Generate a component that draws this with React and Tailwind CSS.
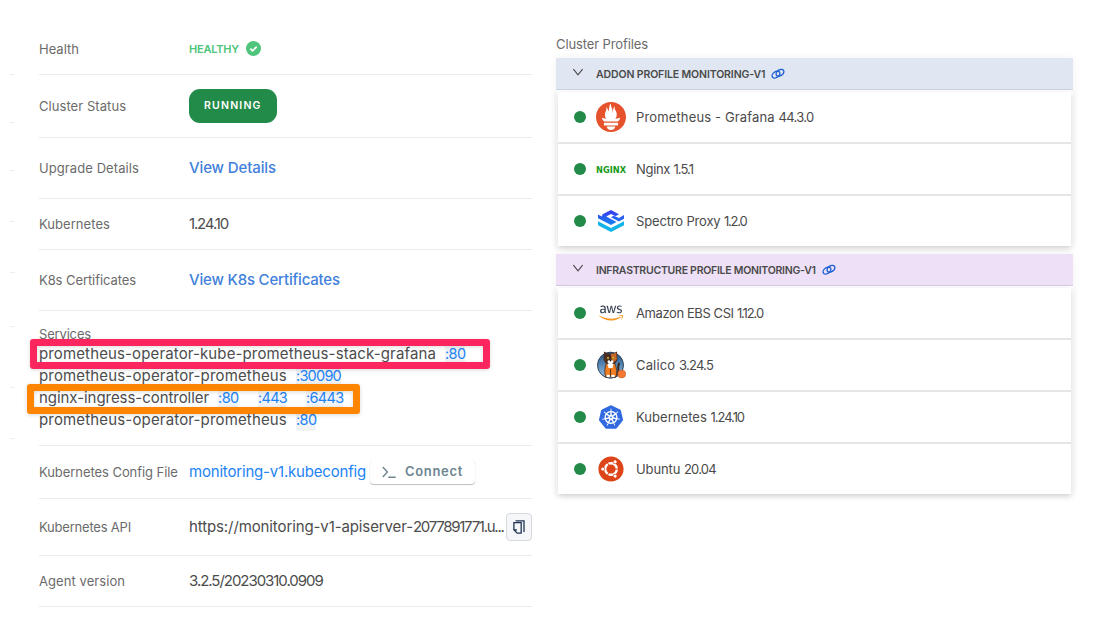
import React from "react";
import { SiPrometheus, SiKubernetes } from "react-icons/si";
import { FaAws, FaUbuntu } from "react-icons/fa";

const T = ({ className = "", children }) => (
  <span className={`whitespace-pre ${className}`}>{children}</span>
);

const label = "pt-[2px] text-[13px] text-[#6b6b6b]";
const value = "pt-px text-[15px] text-[#4c4c4c]";
const link = "pt-px text-[15px] font-medium text-[#4180db]";

const Row = ({ h, name, track = "", children }) => (
  <div className={`flex items-center border-b border-[#ebebeb] ${h}`}>
    <div className="flex w-[150px] shrink-0"><T className={`${label} ${track}`}>{name}</T></div>
    {children}
  </div>
);

const Port = ({ className, children }) => (
  <span className={`flex h-[22px] items-center bg-[#f2f3f4] text-[14.5px] text-[#1c83f5] ${className}`}>
    <T>{children}</T>
  </span>
);

const Service = ({ name, track, children }) => (
  <div className="flex h-[22px] items-center">
    <T className={`${value} pt-0! ${track}`}>{name}</T>
    <div className="ml-[9px] flex gap-5">{children}</div>
  </div>
);

const LinkIcon = () => (
  <svg className="ml-[6px] h-[12px] w-[14px]" viewBox="0 0 14 12" fill="none" stroke="#1d5fd3" strokeWidth="1.4">
    <ellipse cx="5" cy="6.6" rx="4.3" ry="2.9" transform="rotate(-35 5 6.6)" />
    <ellipse cx="9" cy="4.8" rx="4.3" ry="2.9" transform="rotate(-35 9 4.8)" />
  </svg>
);

const Header = ({ name, track, className }) => (
  <div className={`flex h-[32px] items-center border-b pl-[17px] ${className}`}>
    <svg className="mr-[13px] mb-[3px] h-[8px] w-[10px]" viewBox="0 0 10 8" fill="none" stroke="#4a4a4a" strokeWidth="1.1"><path d="M.4 1 5 6.8 9.6 1" /></svg>
    <T className={`pt-[2px] text-[10.5px] font-semibold text-[#4a4a4a] ${track}`}>{name}</T>
    <LinkIcon />
  </div>
);

const Pack = ({ icon, name, version, track = "", vtrack }) => (
  <div className="flex h-[50px] items-center bg-white pl-4">
    <span className="h-3 w-3 rounded-full bg-[#238b49]" />
    <span className="ml-[10px] mr-[10px] flex h-[30px] w-[30px] items-center justify-center">{icon}</span>
    <T className={`pt-px text-[13px] text-[#4a4a4a] ${track}`}>{name + " "}</T>
    <T className={`pt-px text-[13px] text-[#4a4a4a] ${vtrack}`}>{version}</T>
  </div>
);

const Nginx = () => (
  <svg className="h-[10px] w-[30px]" viewBox="0 0 30 10"><text x="0" y="8.8" textLength="30" lengthAdjust="spacingAndGlyphs" fontFamily="DejaVu Sans" fontWeight="700" fontSize="8.4" fill="#169b17">NGINX</text></svg>
);
const Spectro = () => (
  <svg className="h-[22px] w-[26px]" viewBox="0 0 26 22">
    <defs><linearGradient id="sp" gradientUnits="userSpaceOnUse" x1="0" y1="0" x2="0" y2="15"><stop stopColor="#3b35ee" /><stop offset="1" stopColor="#1689f2" /></linearGradient></defs>
    <path fill="url(#sp)" d="M13 0 21 4.2 17.5 6.2 13 4 8.2 6.4 18.6 12 13 15 0 8.2V4.6L3.8 6.6 4.6 4.2Z" />
    <path fill="url(#sp)" d="M26 5V8.8L20.8 11.4 13 7.2 15.6 5.8 21 8Z" />
    <path fill="#12b4e8" d="M0 11.2 13 18 26 11.2V15.2L13 22 0 15.2Z" />
  </svg>
);
const Aws = () => (
  <span className="flex">
    <svg className="h-0 w-0"><defs><linearGradient id="awsfill" x1="0" y1="0" x2="0" y2="1"><stop offset=".61" stopColor="#3b4656" /><stop offset=".61" stopColor="#f7981f" /></linearGradient></defs></svg>
    <FaAws className="h-[20px] w-[24px] [&_path]:fill-[url(#awsfill)]" preserveAspectRatio="none" />
  </span>
);
const Calico = () => (
  <svg className="h-[30px] w-[30px]" viewBox="0 0 30 30">
    <defs><linearGradient id="cal" x1="0" y1="0" x2="0" y2="1"><stop stopColor="#1b4f86" /><stop offset="1" stopColor="#9cc4e8" /></linearGradient></defs>
    <circle cx="14.5" cy="15.2" r="13" fill="url(#cal)" stroke="#23364a" strokeWidth=".9" />
    <path d="M20 25C25 23 20 17 23.5 13" stroke="#3a2a22" strokeWidth="2" fill="none" />
    <path d="M9.5 27C8 21 9 17 10.5 13H18.5C21 18 21 23 20 27Z" fill="#ef7d22" stroke="#33231b" strokeWidth=".7" />
    <path d="M8 1.5 11.5 3.5H17.5L21 1.5 21.5 9Q20.5 14.5 14.5 14.5T7.5 9Z" fill="#4a2d20" />
    <path d="M14.8 3.8H17.5L20.3 2.8 20.8 9.2Q19 12.5 16 12Z" fill="#c96a2b" />
    <path d="M11.5 14Q14.5 12 17.5 14L16.5 18H12.5Z" fill="#fff" />
    <ellipse cx="14.5" cy="11.8" rx="3" ry="1.8" fill="#fff" />
    <circle cx="12" cy="8.2" r="1.1" fill="#f4d33a" /><circle cx="17" cy="8.2" r="1.1" fill="#f4d33a" />
    <circle cx="12" cy="8.2" r=".5" /><circle cx="17" cy="8.2" r=".5" /><circle cx="14.5" cy="10.8" r=".8" />
    <path d="M14.5 19V26.5" stroke="#33231b" strokeWidth=".8" />
    <ellipse cx="12.2" cy="26" rx="1.8" ry="1.3" fill="#fff" /><ellipse cx="17" cy="26" rx="1.8" ry="1.3" fill="#fff" />
    <circle cx="25.7" cy="24" r="4" fill="#f4782f" stroke="#ba5523" strokeWidth=".5" />
  </svg>
);

const ticks = ["h-[75px]", "h-[48px]", "h-[48px]", "h-[51px]", "h-[51px]", "h-[54px]", "h-[61px]", "h-[51px]"];

export default function App() {
  return (
    <div className="flex h-[620px] w-[1111px] overflow-hidden bg-white font-['Inter',sans-serif]">
      <div className="ml-[10px] w-[5px] shrink-0">
        {ticks.map((t, i) => <div key={i} className={`border-b border-[#ececec] ${t}`} />)}
      </div>
      <div className="ml-6 mt-[23px] w-[493px] shrink-0">
        <Row h="h-[52px]" name="Health">
          <T className="pt-[2px] text-[11px] font-semibold tracking-[-0.2px] text-[#4ec57a]">HEALTHY</T>
          <svg className="ml-[7px] h-[15px] w-[15px]" viewBox="0 0 15 15"><circle cx="7.5" cy="7.5" r="7.5" fill="#4ec57a" /><path d="m4.3 7.7 2.3 2.2 4.1-4.3" fill="none" stroke="#fff" strokeWidth="1.7" /></svg>
        </Row>
        <Row h="h-[63px]" name="Cluster Status" track="tracking-[0.06px]">
          <div className="flex h-[34px] w-[88px] items-center rounded-[11px] bg-[#238b49] pl-[15px]">
            <T className="text-[10.5px] font-semibold tracking-[1.2px] text-white">RUNNING</T>
          </div>
        </Row>
        <Row h="h-[61px]" name="Upgrade Details" track="tracking-[0.08px]"><T className={`${link} tracking-[-0.12px]`}>View Details</T></Row>
        <Row h="h-[51px]" name="Kubernetes" track="tracking-[0.05px]"><T className={`${value} tracking-[-1.16px]`}>1.24.10</T></Row>
        <Row h="h-[61px]" name="K8s Certificates" track="tracking-[-0.08px]"><T className={`${link} tracking-[-0.18px]`}>View K8s Certificates</T></Row>
        <div className="relative h-[135px] border-b border-[#ebebeb] pt-[13px]">
          <div className="flex h-[19px] items-center"><T className={`${label} tracking-[-0.17px]`}>Services</T></div>
          <Service name="prometheus-operator-kube-prometheus-stack-grafana" track="tracking-[0.13px]"><Port className="w-[20px] tracking-[-0.6px]">:80</Port></Service>
          <Service name="prometheus-operator-prometheus" track="tracking-[0.16px]"><Port className="w-[45px] tracking-[-0.75px]">:30090</Port></Service>
          <Service name="nginx-ingress-controller" track="tracking-[-0.05px]"><Port className="w-[20px] tracking-[-0.6px]">:80</Port><Port className="w-[28px] tracking-[-0.7px]">:443</Port><Port className="w-[37px] tracking-[-0.7px]">:6443</Port></Service>
          <Service name="prometheus-operator-prometheus" track="tracking-[0.16px]"><Port className="w-[20px] tracking-[-0.6px]">:80</Port></Service>
          <div className="absolute left-[-9px] top-[28px] h-[30px] w-[460px] rounded-[3px] border-[7px] border-[#fb265e] shadow-[0_1px_4px_rgba(0,0,0,0.15),inset_0_1px_4px_rgba(0,0,0,0.15)]" />
          <div className="absolute left-[-12px] top-[73px] h-[30px] w-[333px] rounded-[3px] border-[7px] border-[#ff8400] shadow-[0_1px_4px_rgba(0,0,0,0.15),inset_0_1px_4px_rgba(0,0,0,0.15)]" />
        </div>
        <Row h="h-[53px]" name="Kubernetes Config File" track="tracking-[-0.06px]">
          <T className="text-[15px] tracking-[-0.19px] text-[#1c83f5]">monitoring-v1.kubeconfig</T>
          <div className="ml-1 flex h-6 w-[105px] items-center rounded-[4px] bg-white pl-3 shadow-[0_1px_1px_rgba(0,0,0,0.25),0_0_1px_rgba(0,0,0,0.1)]">
            <svg className="mr-[9px] h-[12px] w-[14px] shrink-0" viewBox="0 0 14 12" fill="none" stroke="#6d8591" strokeWidth="1.4"><path d="m.8 1 4.6 5L.8 11M6.3 11.2h7.4" /></svg>
            <T className="text-[13px] font-semibold tracking-[0.68px] text-[#6d8591]">Connect</T>
          </div>
        </Row>
        <Row h="h-[57px]" name="Kubernetes API" track="tracking-[-0.21px]">
          <T className={`${value} tracking-[-0.11px]`}>https://monitoring-v1-apiserver-</T>
          <T className={`${value} tracking-[-1.27px]`}>2077891771.u...</T>
          <span className="ml-auto flex h-7 w-[26px] shrink-0 items-center justify-center rounded-[4px] border border-[#d8d9da] bg-[#f5f6f9]">
            <svg className="h-[14px] w-[12px]" viewBox="0 0 12 14" fill="none" stroke="#1f3454"><path strokeWidth="1.3" d="M.9 9.8V2.6H8.2V13.1H4.2L.9 9.8H4" /><path strokeWidth="1.3" d="M2.6.8H11V12" /></svg>
          </span>
        </Row>
        <Row h="h-[51px]" name="Agent version" track="tracking-[0.07px]"><T className={`${value} tracking-[-1.04px]`}>3.2.5/20230310.0909</T></Row>
      </div>
      <div className="ml-6 mt-[34px] w-[517px] shrink-0">
        <div className="flex h-5 items-center"><T className={`${label} pt-px! tracking-[-0.11px]`}>Cluster Profiles</T></div>
        <div className="mt-1 h-[188px] shadow-[0_0_8px_rgba(0,0,0,0.06)]">
          <Header name="ADDON PROFILE MONITORING-V1" track="tracking-[-0.12px]" className="border-[#ccd6e4] bg-[#e0e7f3]" />
          <div className="mx-[2px] mt-[2px] flex flex-col gap-[2px] bg-[#e5e6e8] shadow-[0_2px_6px_rgba(0,0,0,0.17)]">
            <Pack icon={<SiPrometheus size={30} color="#e5522c" />} name="Prometheus - Grafana" version="44.3.0" track="tracking-[0.14px]" vtrack="tracking-[-0.7px]" />
            <Pack icon={<Nginx />} name="Nginx" version="1.5.1" track="tracking-[-0.31px]" vtrack="tracking-[-0.96px]" />
            <Pack icon={<Spectro />} name="Spectro Proxy" version="1.2.0" track="tracking-[-0.16px]" vtrack="tracking-[-1.22px]" />
          </div>
        </div>
        <div className="mt-2 shadow-[0_0_8px_rgba(0,0,0,0.06)]">
          <Header name="INFRASTRUCTURE PROFILE MONITORING-V1" track="tracking-[-0.26px]" className="border-[#d8c9e4] bg-[#ede0f7]" />
          <div className="mx-[2px] mt-[2px] flex flex-col gap-[2px] bg-[#e5e6e8] shadow-[0_2px_6px_rgba(0,0,0,0.17)]">
            <Pack icon={<Aws />} name="Amazon EBS CSI" version="1.12.0" track="tracking-[-0.41px]" vtrack="tracking-[-1.12px]" />
            <Pack icon={<Calico />} name="Calico" version="3.24.5" track="tracking-[0.15px]" vtrack="tracking-[-0.77px]" />
            <Pack icon={<SiKubernetes size={24} color="#3069e0" />} name="Kubernetes" version="1.24.10" track="tracking-[0.04px]" vtrack="tracking-[-1.05px]" />
            <Pack icon={<FaUbuntu size={26} color="#dd4518" />} name="Ubuntu" version="20.04" track="tracking-[-0.1px]" vtrack="tracking-[-0.77px]" />
          </div>
        </div>
      </div>
    </div>
  );
}
